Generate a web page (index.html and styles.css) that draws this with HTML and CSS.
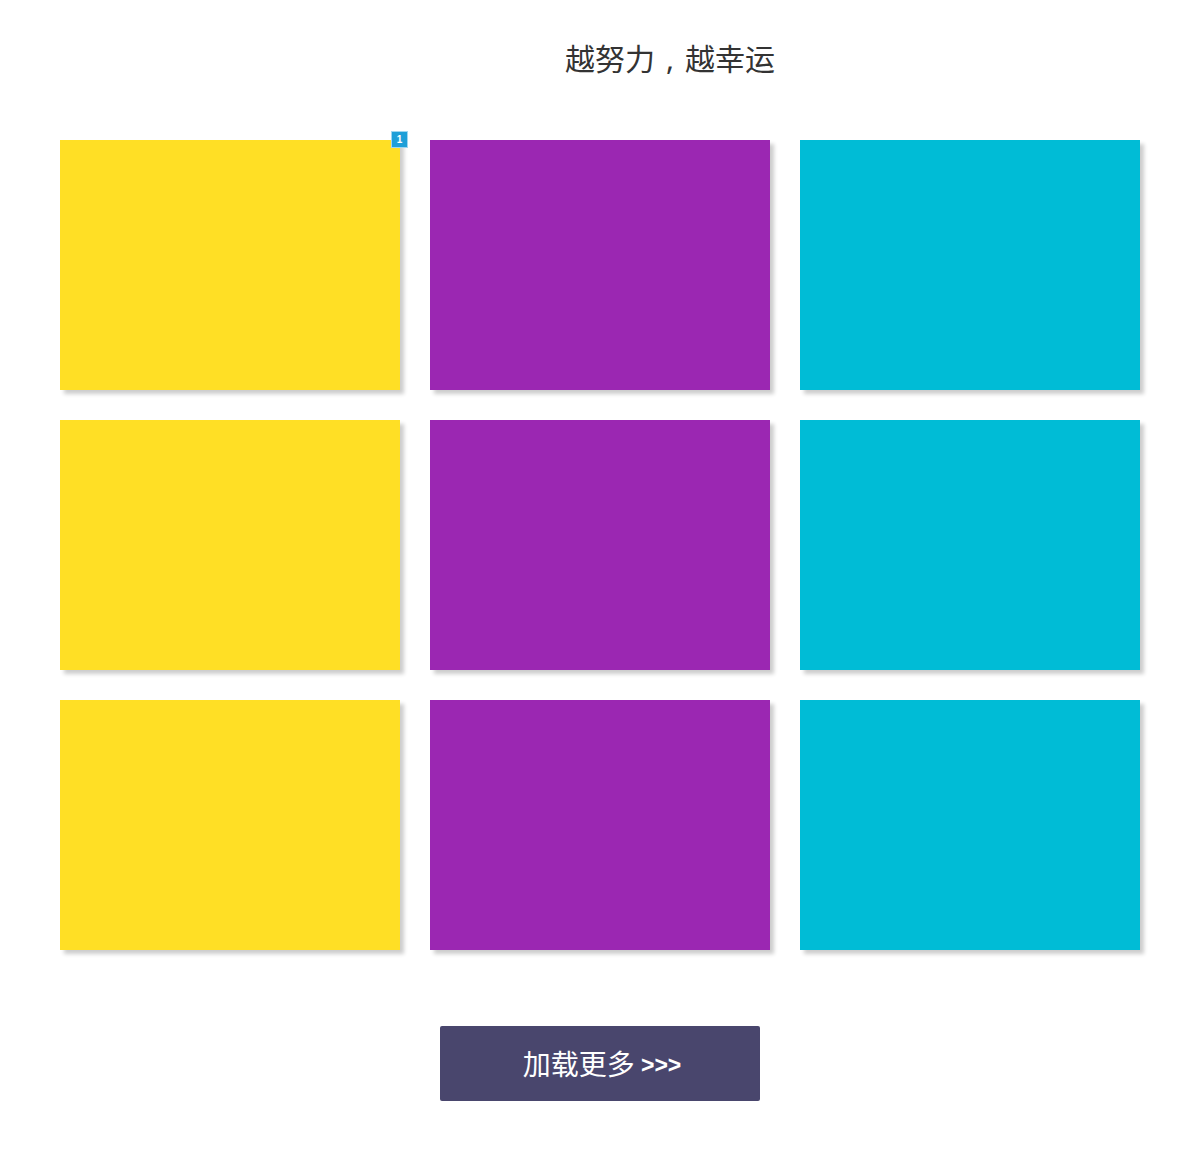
FILE: index.html
```html
<!DOCTYPE html>
<html lang="zh">
<head>
<meta charset="utf-8">
<title>越努力，越幸运</title>
<link rel="stylesheet" href="styles.css">
</head>
<body>
<div class="page">
  <h1 class="title">越努力<span class="comma">,</span>越幸运</h1>
  <div class="grid">
    <div class="card yellow"><span class="badge">1</span></div>
    <div class="card purple"></div>
    <div class="card cyan"></div>
    <div class="card yellow"></div>
    <div class="card purple"></div>
    <div class="card cyan"></div>
    <div class="card yellow"></div>
    <div class="card purple"></div>
    <div class="card cyan"></div>
  </div>
  <div class="actions">
    <button class="more">加载更多 <span class="arrows">&gt;&gt;&gt;</span></button>
  </div>
</div>
</body>
</html>
```
FILE: styles.css
```css
html, body {
  margin: 0;
  padding: 0;
  background: #fff;
}
body {
  font-family: "Noto Sans CJK SC", "Noto Sans", sans-serif;
}
.page {
  width: 1080px;
  margin: 0 auto;
  padding-bottom: 71px;
}
.title {
  margin: 0;
  padding: 39px 0 0 140px;
  height: 140px;
  box-sizing: border-box;
  text-align: center;
  font-size: 30px;
  line-height: 36px;
  font-weight: normal;
  color: #333;
}
.comma {
  display: inline-block;
  width: 30px;
  text-align: center;
  font-family: "Noto Sans", sans-serif;
}
.grid {
  display: grid;
  grid-template-columns: repeat(3, 340px);
  grid-auto-rows: 250px;
  gap: 30px;
}
.card {
  position: relative;
  box-shadow: 4px 4px 4px rgba(0, 0, 0, 0.2);
}
.yellow { background: #FFDF25; }
.purple { background: #9B27B2; }
.cyan { background: #00BCD6; }
.badge {
  position: absolute;
  top: -9px;
  right: -8px;
  width: 17px;
  height: 17px;
  box-sizing: border-box;
  border: 1px solid #9fd6f0;
  background: #1E9FD8;
  color: #fff;
  font-family: "Liberation Sans", Arial, sans-serif;
  font-size: 10px;
  font-weight: bold;
  line-height: 15px;
  text-align: center;
}
.actions {
  display: flex;
  justify-content: center;
  margin-top: 76px;
}
.more {
  width: 320px;
  height: 75px;
  border: none;
  border-radius: 2px;
  background: #49466D;
  color: #fff;
  font-family: "Noto Sans CJK SC", "Noto Sans", sans-serif;
  font-size: 28px;
  padding: 0 0 2px 4px;
  cursor: pointer;
}
.arrows {
  font-family: "Liberation Sans", Arial, sans-serif;
  font-size: 23px;
  font-weight: bold;
  vertical-align: 2px;
}
```
